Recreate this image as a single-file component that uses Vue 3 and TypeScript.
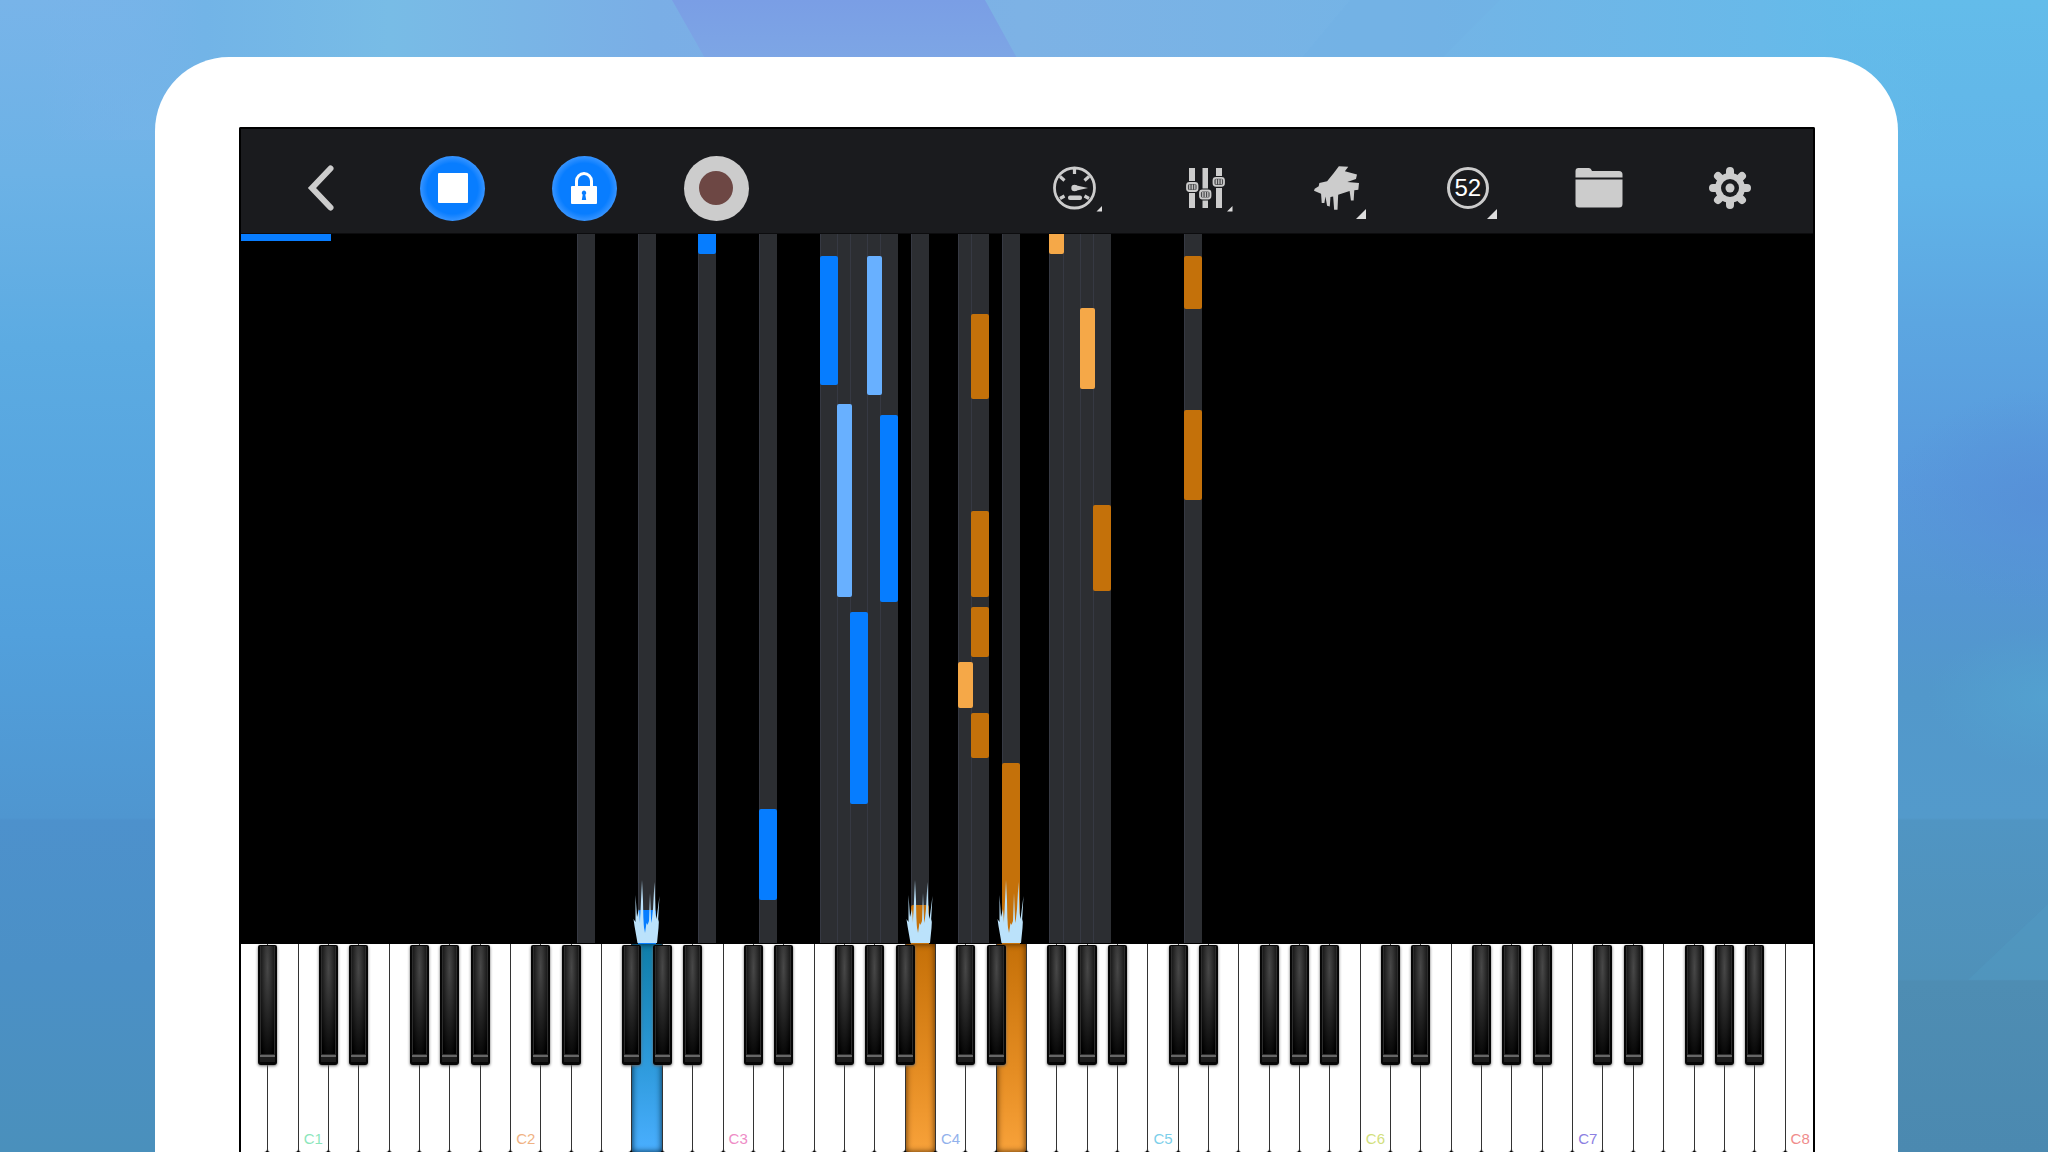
<script setup lang="ts">
type Tone = 'blue' | 'sky' | 'amber' | 'gold'

interface Note {
  /** Centre of the note, in white keys from the left end of the keyboard. */
  pos: number
  from: number
  to: number
  tone: Tone
}

interface Slot {
  index: number
  name: string
  sharp: boolean
  label: string
  labelColor: string
  pressed: '' | 'left-hand' | 'right-hand'
}

const WHITE_KEYS = 52
const FIELD_HEIGHT = 710

const lanes: number[] = [
  11.5, 13.5, 15.5, 17.5, 19.5, 20, 20.5, 21, 21.5, 22.5,
  24, 24.5, 25.5, 27, 27.5, 28, 28.5, 31.5,
]

const notes: Note[] = [
  { pos: 13.5, from: 676, to: 712, tone: 'blue' },
  { pos: 15.5, from: -4, to: 20, tone: 'blue' },
  { pos: 17.5, from: 575, to: 666, tone: 'blue' },
  { pos: 19.5, from: 22, to: 151, tone: 'blue' },
  { pos: 20, from: 170, to: 363, tone: 'sky' },
  { pos: 20.5, from: 378, to: 570, tone: 'blue' },
  { pos: 21, from: 22, to: 161, tone: 'sky' },
  { pos: 21.5, from: 181, to: 368, tone: 'blue' },
  { pos: 22.5, from: 671, to: 712, tone: 'amber' },
  { pos: 24, from: 428, to: 474, tone: 'gold' },
  { pos: 24.5, from: 80, to: 165, tone: 'amber' },
  { pos: 24.5, from: 277, to: 363, tone: 'amber' },
  { pos: 24.5, from: 373, to: 423, tone: 'amber' },
  { pos: 24.5, from: 479, to: 524, tone: 'amber' },
  { pos: 25.5, from: 529, to: 712, tone: 'amber' },
  { pos: 27, from: -4, to: 20, tone: 'gold' },
  { pos: 28, from: 74, to: 155, tone: 'gold' },
  { pos: 28.5, from: 271, to: 357, tone: 'amber' },
  { pos: 31.5, from: 22, to: 75, tone: 'amber' },
  { pos: 31.5, from: 176, to: 266, tone: 'amber' },
]

const sparks: number[] = [13.5, 22.5, 25.5]

const letters = ['A', 'B', 'C', 'D', 'E', 'F', 'G']
const octaveColors = ['#8ce6bb', '#f0b283', '#ee8cc6', '#92b2ec', '#7ccfea', '#d2e07c', '#8c80e2', '#f08c8c']
const pressedKeys: Record<number, 'left-hand' | 'right-hand'> = { 13: 'left-hand', 22: 'right-hand', 25: 'right-hand' }

const slots: Slot[] = Array.from({ length: WHITE_KEYS }, (_, index) => {
  const letter = letters[index % 7]
  const octave = Math.floor((index + 5) / 7)
  return {
    index,
    name: letter + octave,
    sharp: 'ACDFG'.includes(letter) && index < WHITE_KEYS - 1,
    label: letter === 'C' ? letter + octave : '',
    labelColor: octaveColors[octave - 1] ?? '#999',
    pressed: pressedKeys[index] ?? '',
  }
})

const isBlack = (pos: number): boolean => Number.isInteger(pos)
const across = (pos: number) => ({ left: `${(pos / WHITE_KEYS) * 100}%` })
const noteStyle = (n: Note) => ({
  ...across(n.pos),
  top: `${(n.from / FIELD_HEIGHT) * 100}%`,
  height: `${((n.to - n.from) / FIELD_HEIGHT) * 100}%`,
})
</script>

<template>
  <main class="page">
    <svg class="backdrop" viewBox="0 0 2048 1152" preserveAspectRatio="none" aria-hidden="true">
      <defs>
        <linearGradient id="west" x1="0" y1="0" x2="0" y2="1">
          <stop offset="0" stop-color="#78b4e9" />
          <stop offset="0.15" stop-color="#6cb2e6" />
          <stop offset="0.3" stop-color="#5cabe2" />
          <stop offset="0.55" stop-color="#52a0dc" />
          <stop offset="0.71" stop-color="#4f96d0" />
          <stop offset="0.712" stop-color="#4d91cc" />
          <stop offset="0.84" stop-color="#4b90c6" />
          <stop offset="1" stop-color="#4a90bc" />
        </linearGradient>
        <linearGradient id="east" x1="0" y1="0" x2="0" y2="1">
          <stop offset="0" stop-color="#63bcea" />
          <stop offset="0.16" stop-color="#61b4e8" />
          <stop offset="0.28" stop-color="#5ca6e1" />
          <stop offset="0.42" stop-color="#5899dc" />
          <stop offset="0.52" stop-color="#5496d2" />
          <stop offset="0.6" stop-color="#5298cb" />
          <stop offset="0.71" stop-color="#539acb" />
          <stop offset="0.712" stop-color="#5095c3" />
          <stop offset="0.85" stop-color="#4f91b9" />
          <stop offset="0.852" stop-color="#4e8db3" />
          <stop offset="1" stop-color="#4b89b0" />
        </linearGradient>
        <linearGradient id="top" x1="0" y1="0" x2="1" y2="0">
          <stop offset="0.02" stop-color="#7ab3ea" stop-opacity="0" />
          <stop offset="0.1" stop-color="#72b4e7" />
          <stop offset="0.19" stop-color="#78bce6" />
          <stop offset="0.32" stop-color="#7aaee6" />
          <stop offset="0.5" stop-color="#7db2e5" />
          <stop offset="0.7" stop-color="#73b4e6" />
          <stop offset="0.86" stop-color="#68b9e9" />
          <stop offset="0.95" stop-color="#63bcea" stop-opacity="0" />
        </linearGradient>
        <linearGradient id="violet" x1="0" y1="0" x2="0" y2="1">
          <stop offset="0" stop-color="#7a9ee5" />
          <stop offset="1" stop-color="#7da6e5" />
        </linearGradient>
        <radialGradient id="dusk">
          <stop offset="0" stop-color="#568fd7" stop-opacity=".8" />
          <stop offset="1" stop-color="#568fd7" stop-opacity="0" />
        </radialGradient>
        <radialGradient id="teal">
          <stop offset="0" stop-color="#53a3d1" stop-opacity=".8" />
          <stop offset="1" stop-color="#53a3d1" stop-opacity="0" />
        </radialGradient>
      </defs>
      <rect width="1024" height="1152" fill="url(#west)" />
      <rect x="1024" width="1024" height="1152" fill="url(#east)" />
      <rect width="2048" height="140" fill="url(#top)" />
      <polygon points="672,0 985,0 1018,60 706,60" fill="url(#violet)" />
      <polygon points="1350,0 1500,0 1440,60 1300,60" fill="#6fb0e6" opacity=".3" />
      <ellipse cx="2040" cy="500" rx="150" ry="110" fill="url(#dusk)" />
      <ellipse cx="2048" cy="698" rx="120" ry="70" fill="url(#teal)" />
      <polygon points="2048,904 2048,980 1968,980" fill="#52a0c8" opacity=".3" />
    </svg>

    <section class="tablet">
      <div class="screen">
        <header class="toolbar">
          <div class="tools playback">
            <button type="button" class="tool" aria-label="Back">
              <svg width="66" height="66" viewBox="0 0 66 66"><path d="M42.500 13.500 24 33l18.500 19.500" fill="none" stroke="#ccc" stroke-width="6" stroke-linecap="round" /></svg>
            </button>
            <button type="button" class="tool" aria-label="Stop">
              <span class="disc active"><svg width="30" height="30" viewBox="0 0 30 30"><rect width="30" height="30" rx="1" fill="#fff" /></svg></span>
            </button>
            <button type="button" class="tool" aria-label="Lock">
              <span class="disc active">
                <svg width="26" height="32" viewBox="0 0 26 32">
                  <path d="M5.500 16V9a7.500 7.500 0 0 1 15 0v7" fill="none" stroke="#fff" stroke-width="3" />
                  <rect y="14" width="26" height="18" rx="1" fill="#fff" />
                  <path d="M13 18.500a2.400 2.400 0 0 1 1.300 4.300l.9 5.200h-4.400l.9-5.200A2.400 2.400 0 0 1 13 18.500z" fill="#087dff" />
                </svg>
              </span>
            </button>
            <button type="button" class="tool" aria-label="Record">
              <span class="disc record"><svg width="34" height="34" viewBox="0 0 34 34"><circle cx="17" cy="17" r="17" fill="#6d4744" /></svg></span>
            </button>
          </div>

          <div class="tools settings">
            <button type="button" class="tool" aria-label="Tempo">
              <svg width="66" height="66" viewBox="0 0 66 66">
                <circle cx="33.500" cy="33" r="20" fill="none" stroke="#ccc" stroke-width="2.800" />
                <path d="M33.500 13v6M19 21.500l4.500 4M48 21.500l-4.500 4M19 43.500l4.500-2.500M48 43.500l-4.500-2.500" stroke="#ccc" stroke-width="3.200" />
                <path d="M33.500 30 47 33 33.500 36z" fill="#ccc" />
                <circle cx="33.500" cy="33" r="3.200" fill="#ccc" />
                <rect x="27" y="40.500" width="14" height="4.500" rx="2" fill="#ccc" />
                <path d="M61 51v5.500h-5.500z" fill="#ddd" />
              </svg>
            </button>
            <button type="button" class="tool" aria-label="Mixer">
              <svg width="66" height="66" viewBox="0 0 66 66">
                <g fill="#ccc">
                  <rect x="17" y="13" width="6" height="40" />
                  <rect x="30.500" y="13" width="5.500" height="40" />
                  <rect x="44" y="13" width="6" height="40" />
                </g>
                <g fill="#1b1c1f">
                  <rect x="16" y="26" width="8" height="12" />
                  <rect x="29" y="33.500" width="8" height="12" />
                  <rect x="43" y="21" width="8" height="12" />
                </g>
                <g fill="#4a4b4d" stroke="#ccc" stroke-width="1.800">
                  <rect x="15" y="28" width="10.500" height="8" rx="2.500" />
                  <rect x="28" y="35.500" width="10.500" height="8" rx="2.500" />
                  <rect x="41.500" y="22.800" width="10.500" height="8" rx="2.500" />
                </g>
                <path d="M17.800 29.500v5M20.300 29.500v5M22.800 29.500v5M30.800 37v5M33.300 37v5M35.800 37v5M44.300 24.300v5M46.800 24.300v5M49.300 24.300v5" stroke="#ccc" stroke-width="1.200" />
                <path d="M60.500 51v5.500H55z" fill="#ddd" />
              </svg>
            </button>
            <button type="button" class="tool" aria-label="Instrument">
              <svg width="45" height="44" viewBox="0 0 134 130">
                <path d="M74 0 102 2 92 15 128 25 125 38 99 47l35 3-2 20-12 2-2 30h-8l-4-28-34 11-2 45H60l-3-40-8 2-2 28-8-2-5-28-3 20h-8l-2-28L0 73l2-6 12-7 2-10 23-5 20-25z" fill="#ccc" />
              </svg>
              <svg class="corner" width="10" height="10" viewBox="0 0 10 10"><path d="M10 0v10H0z" fill="#ddd" /></svg>
            </button>
            <button type="button" class="tool" aria-label="Sustain level 52">
              <span class="ring">52</span>
              <svg class="corner" width="10" height="10" viewBox="0 0 10 10"><path d="M10 0v10H0z" fill="#ddd" /></svg>
            </button>
            <button type="button" class="tool" aria-label="Files">
              <svg width="66" height="66" viewBox="0 0 66 66">
                <path d="M9.500 22.500V16a3 3 0 0 1 3-3H23q2 0 3 3h27a3.500 3.500 0 0 1 3.500 3.500v3z" fill="#ccc" />
                <path d="M9.500 24.500h47V49a3.500 3.500 0 0 1-3.500 3.500H13A3.500 3.500 0 0 1 9.500 49z" fill="#ccc" />
              </svg>
            </button>
            <button type="button" class="tool" aria-label="Settings">
              <svg width="66" height="66" viewBox="0 0 66 66">
                <g stroke="#ccc" stroke-width="8" stroke-linecap="round">
                  <path d="M33 16v34M16 33h34M21 21l24 24M45 21 21 45" />
                </g>
                <circle cx="33" cy="33" r="15" fill="#ccc" />
                <circle cx="33" cy="33" r="9" fill="#1b1c1f" />
                <circle cx="33" cy="33" r="4.500" fill="#ccc" />
              </svg>
            </button>
          </div>
        </header>

        <div class="stage">
          <div class="field">
            <div
              v-for="pos in lanes"
              :key="pos"
              class="lane"
              :class="{ narrow: isBlack(pos) }"
              :style="across(pos)"
            ></div>
            <div
              v-for="(note, i) in notes"
              :key="i"
              class="note"
              :class="[note.tone, { narrow: isBlack(note.pos) }]"
              :style="noteStyle(note)"
            ></div>
            <svg
              v-for="pos in sparks"
              :key="'s' + pos"
              class="spark"
              :style="across(pos)"
              width="28"
              height="64"
              viewBox="0 0 28 64"
              aria-hidden="true"
            >
              <path
                d="M4.500 64 1.500 47 .5 40l2 3V16l1.500 22L6 30l1 14 1-22 1-21 1 21 .5 24 1.500 8 1.500-10 1 2L16 42l1-28 1 26 .5 4 1.500-14 1.500-27L22.500 34l1 6 3-23L25 43l1-3-.5 9L24 64z"
                fill="#bbe2fb"
              />
              <path
                d="M5 64 3.500 46 5.500 36l1 10 1-12 1.500 16 1-12 2 22 2-16 2 10 1.500-15 1 11 2.500-13 1 13 1.500-9 .5 16L24 64z"
                fill="#bbe2fb"
                opacity=".7"
              />
            </svg>
          </div>
          <div class="keyboard">
            <div v-for="slot in slots" :key="slot.index" class="slot">
              <button type="button" class="white" :class="slot.pressed" :aria-label="slot.name">
                <span v-if="slot.label" :style="{ color: slot.labelColor }">{{ slot.label }}</span>
              </button>
              <button v-if="slot.sharp" type="button" class="black" :aria-label="slot.name + ' sharp'"></button>
            </div>
          </div>
          <div class="progress" role="progressbar" aria-label="Song position" aria-valuenow="6"></div>
        </div>
      </div>
    </section>
  </main>
</template>

<style>
html,
body {
  margin: 0;
  background: #4a8fbd;
}
</style>

<style scoped>
.page {
  position: relative;
  display: flex;
  height: 100vh;
  min-height: 720px;
  overflow: hidden;
  font-family: "Liberation Sans", Arial, sans-serif;
}

.backdrop {
  position: absolute;
  inset: 0;
  width: 100%;
  height: 100%;
}

.tablet {
  position: relative;
  display: flex;
  flex: 1;
  box-sizing: border-box;
  margin: 57px 150px 0 155px;
  padding: 70px 83px 0 84px;
  border-radius: 74px 74px 0 0;
  background: #fff;
}

.screen {
  display: flex;
  flex: 1;
  flex-direction: column;
  min-width: 0;
  overflow: hidden;
  border: 2px solid #000;
  border-bottom: 0;
  border-radius: 2px 2px 0 0;
  background: #000;
}

.toolbar {
  display: flex;
  flex: none;
  justify-content: space-between;
  box-sizing: border-box;
  height: 105px;
  padding: 26px 17px 0 14px;
  border-bottom: 1px solid #0c0c0e;
  background: #1a1b1e;
}

.tools {
  display: flex;
  min-width: 0;
}

.playback {
  width: 34.2%;
}

.settings {
  width: 51.1%;
}

button {
  margin: 0;
  padding: 0;
  border: 0;
  background: none;
  font: inherit;
}

.tool {
  position: relative;
  display: flex;
  flex: 1;
  align-items: center;
  justify-content: center;
  height: 66px;
}

.disc {
  display: flex;
  align-items: center;
  justify-content: center;
  width: 65px;
  height: 65px;
  border-radius: 50%;
}

.disc.active {
  background: radial-gradient(circle, #087dff 55%, #3593ff 70%);
}

.disc.record {
  background: #ccc;
}

.ring {
  display: flex;
  align-items: center;
  justify-content: center;
  box-sizing: border-box;
  width: 42px;
  height: 42px;
  border: 3px solid #ccc;
  border-radius: 50%;
  color: #fff;
  font-size: 24px;
  line-height: 36px;
}

.corner {
  position: absolute;
  right: calc(50% - 29px);
  bottom: 2px;
}

.stage {
  position: relative;
  display: flex;
  flex: 1;
  flex-direction: column;
  margin: 0 -2px 0 -4px;
}

.progress {
  position: absolute;
  top: 0;
  left: 0;
  width: 94px;
  height: 7px;
  background: #087dff;
}

.field {
  position: relative;
  flex: 1;
  overflow: hidden;
  background: #000;
}

.lane,
.note {
  position: absolute;
  box-sizing: border-box;
  width: 18px;
  margin-left: -9px;
}

.lane {
  top: 0;
  bottom: 1px;
  border-left: 1px solid #363943;
  background: #2c2e32;
}

.lane.narrow,
.note.narrow {
  width: 15px;
  margin-left: -7px;
}

.note {
  border-radius: 2px;
}

.blue {
  background: #067dff;
}

.sky {
  background: #68b0ff;
}

.amber {
  background: #c4710a;
}

.gold {
  background: #f5a848;
}

.spark {
  position: absolute;
  bottom: 1px;
  margin-left: -14px;
}

.keyboard {
  display: flex;
  flex: none;
  height: 208px;
  background: #000;
}

.slot {
  position: relative;
  flex: 1;
  min-width: 0;
}

.white {
  display: flex;
  align-items: flex-end;
  justify-content: center;
  box-sizing: border-box;
  width: 100%;
  height: 100%;
  padding-bottom: 5px;
  border-left: 1px solid #333;
  border-radius: 0 0 3px 3px;
  background: #fff;
  font-size: 15px;
  line-height: 17px;
}

.white.left-hand {
  background: linear-gradient(#0e7da8, #2f9bdd 60%, #4aafff);
  box-shadow: inset 0 0 6px #00243c;
}

.white.right-hand {
  background: linear-gradient(#c57008, #e48c22 60%, #f8a23a);
  box-shadow: inset 0 0 6px #4d2800;
}

.black {
  position: absolute;
  z-index: 1;
  top: 1px;
  left: 100%;
  width: 19px;
  height: 120px;
  margin-left: -9px;
  border-radius: 2px 2px 3px 3px;
  background: #060606;
  box-shadow: 0 1px 3px #666;
}

.black::before,
.black::after {
  position: absolute;
  left: 2px;
  right: 2px;
  content: "";
}

.black::before {
  top: 1px;
  bottom: 10px;
  border: 1px solid #2c2c2c;
  border-top: 0;
  background: radial-gradient(ellipse 80% 90% at 50% 20%, #484848, #000);
}

.black::after {
  bottom: 3px;
  height: 5px;
  border-top: 2px solid #666;
  background: #1c1c1c;
}
</style>
